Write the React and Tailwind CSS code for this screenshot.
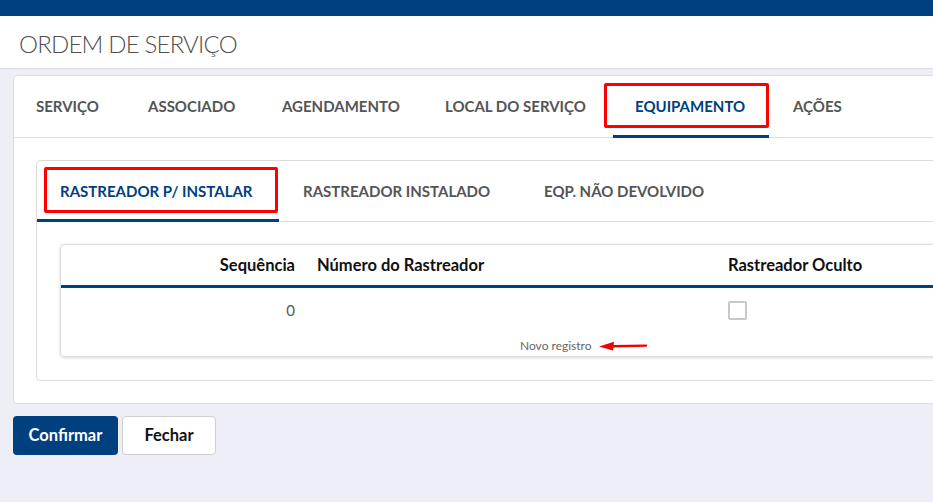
import React from "react";

const mainTabs = [
  { label: "SERVIÇO", w: "w-[112px]" },
  { label: "ASSOCIADO", w: "w-[134px]" },
  { label: "AGENDAMENTO", w: "w-[163px]" },
  { label: "LOCAL DO SERVIÇO", w: "w-[190px]" },
  { label: "EQUIPAMENTO", w: "w-[158px]", active: true, marked: true },
  { label: "AÇÕES", w: "w-[120px]" },
];

const subTabs = [
  { label: "RASTREADOR P/ INSTALAR", w: "w-[242px]", active: true, marked: true },
  { label: "RASTREADOR INSTALADO", w: "w-[241px]", ml: "ml-[1px]" },
  { label: "EQP. NÃO DEVOLVIDO", w: "w-[220px]" },
];

const ArrowLeft = () => (
  <svg width="50" height="10" viewBox="0 0 50 10" className="ml-[6px]">
    <path d="M48 4.6 L14 5.2" stroke="#f00000" strokeWidth="2.4" strokeLinecap="round" />
    <path d="M1 5.4 L16 0.8 L15 9.6 Z" fill="#f00000" />
  </svg>
);

const App = () => {
  return (
    <div className="min-h-screen bg-[#eeeef6] font-['Lato',sans-serif] overflow-hidden">
      <div className="h-4 bg-[#00407f]" />

      <header className="h-[53px] bg-white border-b border-[#d9d9de] pl-[19px] flex items-center">
        <h1 className="text-[24px] font-light text-[#505050] tracking-[-0.8px] pt-[3px]">ORDEM DE SERVIÇO</h1>
      </header>

      <main className="pl-[13px] pt-[6px]">
        {/* main card with tabs */}
        <div className="bg-white border border-[#dcdcdc] rounded-[4px] w-[calc(100%+20px)]">
          <nav className="flex h-[62px] border-b border-[#dedede]">
            {mainTabs.map((tab) => (
              <div
                key={tab.label}
                className={`relative ${tab.w} shrink-0 pl-[22px] flex items-center text-[15px] font-bold whitespace-nowrap ${
                  tab.active ? "text-[#00407f]" : "text-[#555]"
                }`}
              >
                {tab.label}
                {tab.active && <span className="absolute left-0 right-[2px] bottom-[-1px] h-[3px] bg-[#00407f]" />}
                {tab.marked && (
                  <span className="absolute left-[-9px] top-[7px] w-[165px] h-[45px] border-[3px] border-[#f00] rounded-[2px]" />
                )}
              </div>
            ))}
          </nav>

          <div className="pl-[22px] pt-[22px] pb-[22px]">
            {/* equipment sub tabs */}
            <div className="border border-[#dcdcdc] rounded-[4px]">
              <div className="flex h-[61px] border-b border-[#dedede]">
                {subTabs.map((tab) => (
                  <div
                    key={tab.label}
                    className={`relative ${tab.w} ${tab.ml || ""} shrink-0 pl-[23px] flex items-center text-[15px] font-bold whitespace-nowrap ${
                      tab.active ? "text-[#00407f]" : "text-[#555]"
                    }`}
                  >
                    {tab.label}
                    {tab.active && <span className="absolute left-0 right-0 bottom-[-1px] h-[3px] bg-[#00407f]" />}
                    {tab.marked && (
                      <span className="absolute left-[7px] top-[6px] w-[234px] h-[46px] border-[3px] border-[#f00] rounded-[2px]" />
                    )}
                  </div>
                ))}
              </div>

              <div className="pl-[23px] pt-[22px] pb-[23px]">
                {/* tracker table */}
                <div className="border border-[#dcdcdc] rounded-[4px] shadow-[0_1px_3px_rgba(0,0,0,0.15)]">
                  <div className="flex h-[43px] items-center text-[16.5px] font-bold text-[#111] border-b-[3px] border-[#00407f]">
                    <div className="w-[246px] pr-[12px] text-right">Sequência</div>
                    <div className="w-[411px] pl-[10px]">Número do Rastreador</div>
                    <div className="pl-[10px] whitespace-nowrap">Rastreador Oculto</div>
                  </div>
                  <div className="flex h-[45px] items-center">
                    <div className="w-[246px] pr-[12px] text-right text-[15px] text-[#555]">0</div>
                    <div className="w-[411px]" />
                    <div className="pl-[10px]">
                      <div className="w-[19px] h-[19px] border-2 border-[#c8c8c8] rounded-[2px] bg-white" />
                    </div>
                  </div>
                  <div className="flex items-center h-[23px] pt-[2px] pl-[459px]">
                    <span className="text-[12px] text-[#666]">Novo registro</span>
                    <ArrowLeft />
                  </div>
                </div>
              </div>
            </div>
          </div>
        </div>

        <div className="flex gap-[4px] mt-[12px]">
          <button className="w-[105px] h-[39px] rounded-[4px] bg-[#00407f] text-white text-[16.5px] font-bold">
            Confirmar
          </button>
          <button className="w-[94px] h-[39px] rounded-[4px] bg-white border border-[#cfcfcf] text-[#111] text-[16.5px] font-bold">
            Fechar
          </button>
        </div>
      </main>
    </div>
  );
};

export default App;
